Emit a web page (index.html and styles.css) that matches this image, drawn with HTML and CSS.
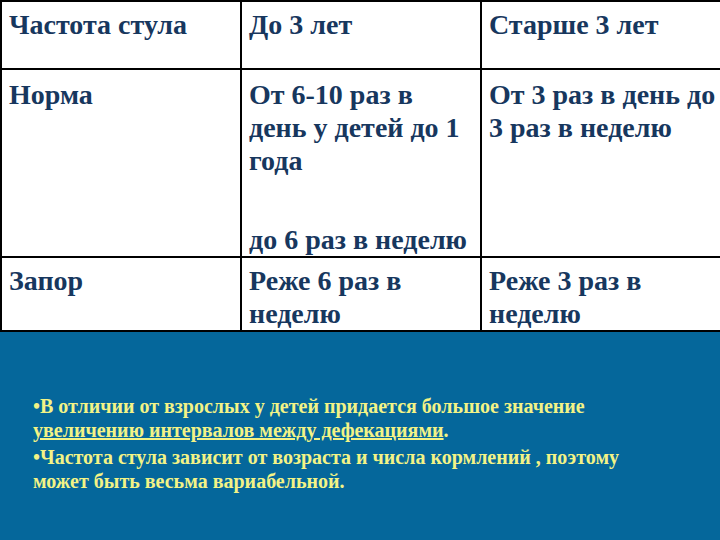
FILE: index.html
```html
<!DOCTYPE html>
<html>
<head>
<meta charset="utf-8">
<link rel="stylesheet" href="styles.css">
</head>
<body>
<div class="page">
  <table class="grid">
    <colgroup><col class="c1"><col class="c2"><col class="c3"></colgroup>
    <tr class="r-head">
      <td>Частота стула</td>
      <td>До 3 лет</td>
      <td class="last">Старше 3 лет</td>
    </tr>
    <tr class="r-norm">
      <td>Норма</td>
      <td><p class="line">От 6-10 раз в день у детей до 1 года</p><p class="line later">до 6 раз в неделю</p></td>
      <td class="last">От 3 раз в день до 3 раз в неделю</td>
    </tr>
    <tr class="r-zapor">
      <td>Запор</td>
      <td>Реже 6 раз в неделю</td>
      <td class="last">Реже 3 раз в неделю</td>
    </tr>
  </table>
  <div class="note">
    <p class="bullet">•В отличии от взрослых у детей придается большое значение <span class="ul">увеличению интервалов между дефекациями</span>.</p>
    <p class="bullet">•Частота стула зависит от возраста и числа кормлений , поэтому может быть весьма вариабельной.</p>
  </div>
</div>
</body>
</html>
```
FILE: styles.css
```css
html, body {
  margin: 0;
  padding: 0;
  background: #ffffff;
}
.page {
  width: 720px;
  height: 540px;
  display: flex;
  flex-direction: column;
  overflow: hidden;
}
.grid {
  width: 720px;
  border-collapse: collapse;
  table-layout: fixed;
  font-family: "Liberation Serif", "Times New Roman", serif;
  font-weight: bold;
  font-size: 28px;
  line-height: 33px;
  color: #17375e;
}
.c1, .c2, .c3 { width: 240px; }
.grid td {
  border: 2px solid #000;
  vertical-align: top;
  padding: 6px 5px 0 7px;
}
.grid td.last { padding-right: 0; }
.r-head td { height: 60px; }
.r-norm td { height: 178px; padding-top: 8px; }
.r-zapor td { height: 66px; padding-top: 6px; }
.line { margin: 0; }
.later { margin-top: 46px; }
.note {
  flex: 1;
  background: #05679b;
  padding: 62px 20px 0 33px;
  font-family: "Liberation Serif", "Times New Roman", serif;
  font-weight: bold;
  font-size: 20px;
  line-height: 24px;
  color: #f3f386;
}
.bullet {
  margin: 0 0 3px 0;
  width: 600px;
}
.ul {
  text-decoration: underline;
}
```
